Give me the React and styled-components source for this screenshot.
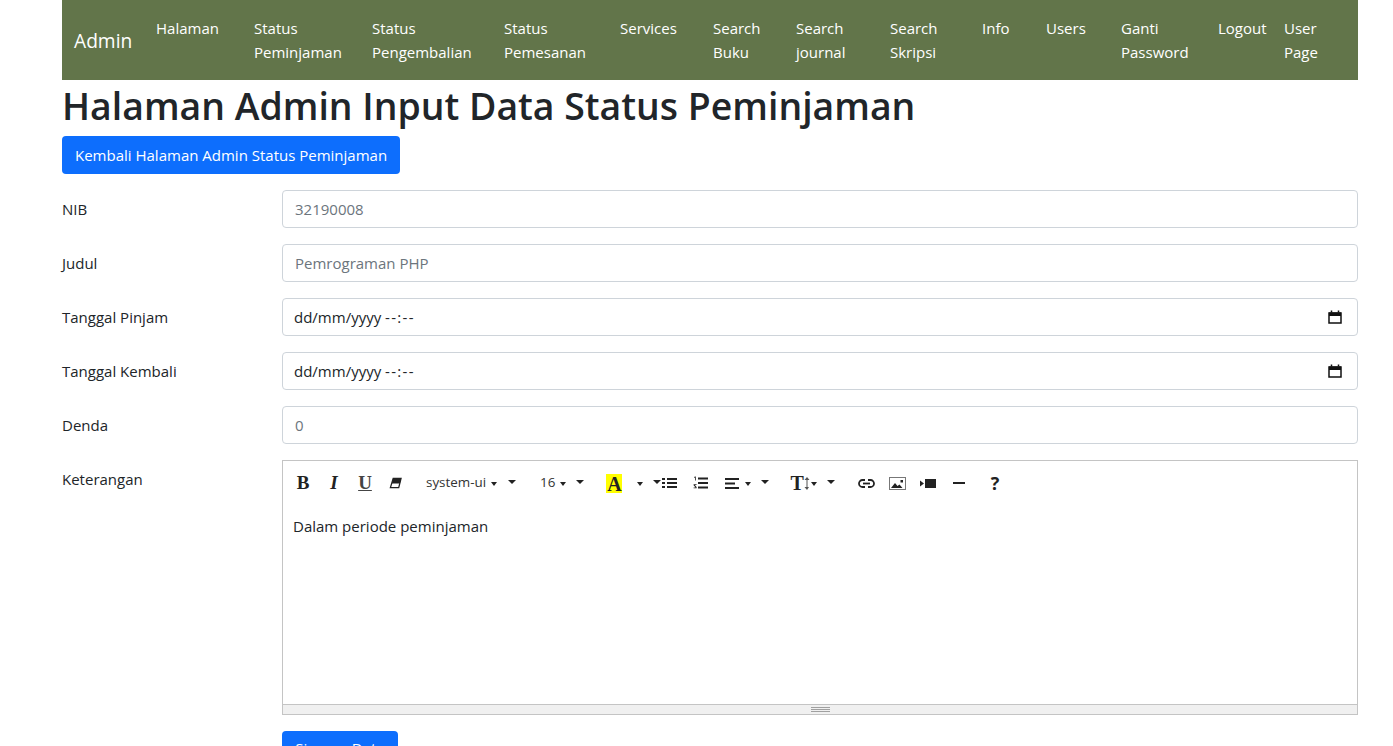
import React from "react";
import styled, { createGlobalStyle } from "styled-components";

const navItems = [
  { label: ["Halaman"], w: 98 },
  { label: ["Status", "Peminjaman"], w: 118 },
  { label: ["Status", "Pengembalian"], w: 132 },
  { label: ["Status", "Pemesanan"], w: 116 },
  { label: ["Services"], w: 93 },
  { label: ["Search", "Buku"], w: 83 },
  { label: ["Search", "journal"], w: 94 },
  { label: ["Search", "Skripsi"], w: 92 },
  { label: ["Info"], w: 64 },
  { label: ["Users"], w: 75 },
  { label: ["Ganti", "Password"], w: 97 },
  { label: ["Logout"], w: 66 },
  { label: ["User", "Page"], w: 70 },
];

const App = () => {
  return (
    <Page>
      <GlobalStyle />
      <Nav>
        <Brand>Admin</Brand>
        {navItems.map((item) => (
          <NavLink key={item.label.join(" ")} $w={item.w}>
            {item.label.map((line) => (
              <span key={line}>{line}</span>
            ))}
          </NavLink>
        ))}
      </Nav>
      <Title>Halaman Admin Input Data Status Peminjaman</Title>
      <Button>Kembali Halaman Admin Status Peminjaman</Button>
      <Form>
        <Row>
          <Label>NIB</Label>
          <Input placeholder="32190008" readOnly />
        </Row>
        <Row>
          <Label>Judul</Label>
          <Input placeholder="Pemrograman PHP" readOnly />
        </Row>
        <Row>
          <Label>Tanggal Pinjam</Label>
          <DateBox>
            <span>
              dd/mm/yyyy <DateTime>--:--</DateTime>
            </span>
            <CalendarIcon />
          </DateBox>
        </Row>
        <Row>
          <Label>Tanggal Kembali</Label>
          <DateBox>
            <span>
              dd/mm/yyyy <DateTime>--:--</DateTime>
            </span>
            <CalendarIcon />
          </DateBox>
        </Row>
        <Row>
          <Label>Denda</Label>
          <Input placeholder="0" readOnly />
        </Row>
        <Row>
          <Label>Keterangan</Label>
          <Editor>
            <Toolbar>
              <ToolText $w={31}>B</ToolText>
              <ToolText $w={31} $italic>I</ToolText>
              <ToolText $w={31} $underline $color="#444">U</ToolText>
              <Spacer $w={5} />
              <ToolIcon $w={31}>
                <svg width="13" height="12" viewBox="0 0 14 13">
                  <path d="M4.500 1.500h8.500L10.500 11.500H1.500z" fill="#fff" stroke="#222" strokeWidth="1.400" />
                  <path d="M4.500 1.500h8.500L11.800 7H3z" fill="#222" />
                </svg>
              </ToolIcon>
              <Spacer $w={6} />
              <ToolLabel>system-ui</ToolLabel>
              <Caret $small $left={5} />
              <Caret $left={11} />
              <Spacer $w={24} />
              <ToolLabel>16</ToolLabel>
              <Caret $small $left={5} />
              <Caret $left={10} />
              <Spacer $w={22} />
              <Highlight>A</Highlight>
              <Caret $small $left={15} />
              <Caret $left={10} />
              <Spacer $w={1} />
              <ToolIcon $w={15}>
                <svg width="15" height="12" viewBox="0 0 15 12" fill="#222">
                  <rect x="0" y="1" width="3" height="2" />
                  <rect x="0" y="5" width="3" height="2" />
                  <rect x="0" y="9" width="3" height="2" />
                  <rect x="5" y="1" width="10" height="2" />
                  <rect x="5" y="5" width="10" height="2" />
                  <rect x="5" y="9" width="10" height="2" />
                </svg>
              </ToolIcon>
              <Spacer $w={16} />
              <ToolIcon $w={15}>
                <svg width="15" height="14" viewBox="0 0 15 14" fill="#222">
                  <rect x="5" y="1.500" width="10" height="2" />
                  <rect x="5" y="6" width="10" height="2" />
                  <rect x="5" y="10.500" width="10" height="2" />
                  <path d="M1 1l1.200-.6h.6v4H2V1.400L1 1.800z" />
                  <path d="M.6 8.200h3v.8H1.900L3.600 11v1.200H.6v-.8h2L.6 9.200z" />
                </svg>
              </ToolIcon>
              <Spacer $w={17} />
              <ToolIcon $w={14}>
                <svg width="14" height="11" viewBox="0 0 14 11" fill="#222">
                  <rect x="0" y="0" width="14" height="2" />
                  <rect x="0" y="4.500" width="10" height="2" />
                  <rect x="0" y="9" width="14" height="2" />
                </svg>
              </ToolIcon>
              <Caret $small $left={6} />
              <Caret $left={10} />
              <Spacer $w={21} />
              <SizeIcon>
                T
                <svg width="6" height="13" viewBox="0 0 6 13" fill="#555">
                  <path d="M3 0l2.500 3H3.500v7H5l-2 3-2.500-3h2V3H.5z" />
                </svg>
              </SizeIcon>
              <Caret $small $left={1} />
              <Caret $left={10} />
              <Spacer $w={23} />
              <ToolIcon $w={17}>
                <svg width="17" height="9" viewBox="0 0 17 9" fill="none" stroke="#222" strokeWidth="1.800">
                  <path d="M7 1H4.500a3.500 3.500 0 0 0 0 7H7" />
                  <path d="M10 1h2.500a3.500 3.500 0 0 1 0 7H10" />
                  <path d="M5 4.500h7" />
                </svg>
              </ToolIcon>
              <Spacer $w={14} />
              <ToolIcon $w={17}>
                <svg width="17" height="13" viewBox="0 0 17 13">
                  <rect x=".5" y=".5" width="16" height="12" fill="#fff" stroke="#777" />
                  <path d="M2 11l4-5 2.500 3 2-1.500 3 3.500z" fill="#222" />
                  <rect x="11.500" y="3" width="2.500" height="2.500" fill="#222" />
                </svg>
              </ToolIcon>
              <Spacer $w={14} />
              <ToolIcon $w={16}>
                <svg width="16" height="9" viewBox="0 0 16 9" fill="#222">
                  <rect x="5" y="0" width="11" height="9" />
                  <path d="M0 1.500l4 3-4 3z" />
                </svg>
              </ToolIcon>
              <Spacer $w={17} />
              <ToolIcon $w={12}>
                <svg width="12" height="2" viewBox="0 0 12 2">
                  <rect width="12" height="2" fill="#222" />
                </svg>
              </ToolIcon>
              <Spacer $w={26} />
              <Help>?</Help>
            </Toolbar>
            <EditorBody>Dalam periode peminjaman</EditorBody>
            <Resize>
              <Grip />
            </Resize>
          </Editor>
        </Row>
        <Row>
          <Spacer $w={220} />
          <SaveButton>Simpan Data</SaveButton>
        </Row>
      </Form>
    </Page>
  );
};
export default App;

const CalendarIcon = () => (
  <svg width="14" height="14" viewBox="0 0 14 14" fill="none">
    <path d="M1 3h12v10H1z" stroke="#111" strokeWidth="1.500" />
    <path d="M1 2.500h12V6H1z" fill="#111" />
    <path d="M3.500 .5v2M10.500 .5v2" stroke="#111" strokeWidth="1.500" />
  </svg>
);

const GlobalStyle = createGlobalStyle`
  html, body {
    margin: 0;
    height: 746px;
    overflow: hidden;
    background: #fff;
  }
  * {
    box-sizing: border-box;
  }
`;

const Page = styled.div`
  width: 1296px;
  margin-left: 62px;
  font-family: "Open Sans", "Noto Sans", sans-serif;
  font-size: 15px;
  color: #212529;
`;

const Nav = styled.nav`
  display: flex;
  height: 80px;
  background: #62754a;
  color: #fff;
`;

const Brand = styled.div`
  width: 94px;
  padding-left: 12px;
  font-size: 19.2px;
  line-height: 82px;
`;

const NavLink = styled.div`
  width: ${(p) => p.$w}px;
  flex: none;
  display: flex;
  flex-direction: column;
  padding-top: 16px;
  line-height: 24px;
  white-space: nowrap;
`;

const Title = styled.h1`
  margin: 0;
  height: 56px;
  font-size: 37.4px;
  font-weight: 600;
  line-height: 52px;
  white-space: nowrap;
`;

const Button = styled.div`
  display: inline-block;
  height: 38px;
  padding: 0 13px;
  background: #0d6efd;
  border-radius: 4px;
  color: #fff;
  line-height: 38px;
  white-space: nowrap;
`;

const SaveButton = styled(Button)`
  width: 116px;
  padding: 0;
  text-align: center;
  line-height: 35px;
`;

const Form = styled.div`
  display: flex;
  flex-direction: column;
  gap: 16px;
  margin-top: 16px;
`;

const Row = styled.div`
  display: flex;
  align-items: flex-start;
`;

const Label = styled.div`
  width: 220px;
  flex: none;
  padding-top: 7px;
  line-height: 24px;
`;

const Input = styled.input`
  flex: 1;
  height: 38px;
  padding: 0 12px;
  border: 1px solid #ced4da;
  border-radius: 4px;
  font: inherit;
  outline: none;
  &::placeholder {
    color: #6c757d;
    opacity: 1;
  }
`;

const DateBox = styled.div`
  flex: 1;
  height: 38px;
  display: flex;
  align-items: center;
  justify-content: space-between;
  padding: 0 15px 0 11px;
  border: 1px solid #ced4da;
  border-radius: 4px;
`;

const DateTime = styled.span`
  letter-spacing: 1.3px;
`;

const Editor = styled.div`
  flex: 1;
  height: 255px;
  display: flex;
  flex-direction: column;
  border: 1px solid #c4c4c4;
`;

const Toolbar = styled.div`
  height: 44px;
  display: flex;
  align-items: center;
  padding: 0 0 0 8px;
`;

const ToolText = styled.span`
  width: ${(p) => p.$w}px;
  flex: none;
  text-align: center;
  padding-right: 7px;
  font-family: "Liberation Serif", serif;
  font-size: 19px;
  font-weight: 700;
  font-style: ${(p) => (p.$italic ? "italic" : "normal")};
  text-decoration: ${(p) => (p.$underline ? "underline" : "none")};
  color: ${(p) => p.$color || "#222"};
`;

const ToolIcon = styled.span`
  width: ${(p) => p.$w}px;
  flex: none;
  display: flex;
  align-items: center;
`;

const ToolLabel = styled.span`
  margin-bottom: 2px;
  font-size: 13.4px;
  color: #333;
`;

const Spacer = styled.span`
  width: ${(p) => p.$w}px;
  flex: none;
`;

const Caret = styled.span`
  flex: none;
  margin-left: ${(p) => p.$left}px;
  margin-top: ${(p) => (p.$small ? 1 : -3)}px;
  border-style: solid;
  border-color: #222 transparent transparent;
  border-width: ${(p) => (p.$small ? "4px 3.5px 0" : "4.5px 4.5px 0")};
`;

const Highlight = styled.span`
  width: 16px;
  height: 19px;
  flex: none;
  background: #ff0;
  color: #222;
  text-align: center;
  font-family: "Liberation Serif", serif;
  font-weight: 700;
  font-size: 20px;
  line-height: 20px;
`;

const SizeIcon = styled.span`
  display: flex;
  align-items: center;
  color: #222;
  font-family: "Liberation Serif", serif;
  font-weight: 700;
  font-size: 20px;
`;

const Help = styled.span`
  font-weight: 700;
  font-size: 18px;
  color: #222;
`;

const EditorBody = styled.div`
  flex: 1;
  padding: 9px 10px;
  line-height: 24px;
`;

const Resize = styled.div`
  height: 10px;
  display: flex;
  align-items: center;
  justify-content: center;
  background: #f0f0f0;
  border-top: 1px solid #c4c4c4;
`;

const Grip = styled.div`
  width: 19px;
  height: 5px;
  position: relative;
  border-top: 1px solid #a0a0a0;
  border-bottom: 1px solid #a0a0a0;
  &::after {
    content: "";
    position: absolute;
    left: 0;
    right: 0;
    top: 1px;
    border-top: 1px solid #a0a0a0;
  }
`;
